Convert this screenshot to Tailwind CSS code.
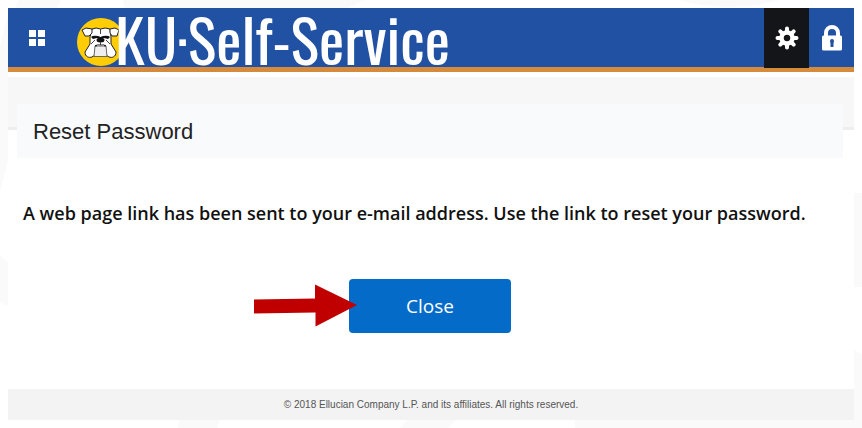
<!DOCTYPE html>
<html lang="en">

<head>
    <meta charset="UTF-8">
    <meta name="viewport" content="width=device-width, initial-scale=1.0">
    <title>KU Self-Service - Reset Password</title>
    <script src="https://cdn.jsdelivr.net/npm/@tailwindcss/browser@4"></script>
</head>

<body class="relative min-h-screen bg-white p-2 font-['Open_Sans',sans-serif] text-[#111]">

    <!-- Faint shapes behind the page -->
    <svg class="absolute inset-0 -z-10 h-full w-full" viewBox="0 0 862 428" preserveAspectRatio="none" fill="#fafafa" aria-hidden="true">
        <path d="M19 0H61L57 8H15ZM122 0H364L348 8H125ZM678 0H780Q730 14 678 0Z" />
        <path d="M8 15V160L0 192V46ZM0 256L8 262V306L0 302Z" />
        <path d="M854 193H862V287H854ZM854 350L862 354V428H575V420H854Z" />
        <path d="M180 420H220L217 428H178ZM407 420H456L448 428H400Z" />
    </svg>

    <div class="bg-white">
        <header class="flex h-16 items-stretch border-b-5 border-[#d68a3c] bg-[#2151a3]">
            <button type="button" class="ml-[21px] flex w-4 items-center justify-center" aria-label="Menu">
                <svg class="h-4 w-4" viewBox="0 0 16 16" fill="#fff">
                    <path d="M0 0H7V7H0ZM9 0H16V7H9ZM0 9H7V16H0ZM9 9H16V16H9Z" />
                </svg>
            </button>

            <a href="#" class="ml-8 flex items-center text-white">
                <svg class="mt-2 h-12 w-12 shrink-0" viewBox="0 0 48 48" aria-hidden="true">
                    <circle cx="24" cy="24" r="24" fill="#ffcd05" />
                    <g fill="#fff" stroke="#222" stroke-width="1" stroke-linejoin="round">
                        <path d="M15 11Q19 9 23.500 11Q28 9 33 11L34 19L34 26L39 34C39 39 35 40 32 39L29 37H18L15 39C12 40 8 39 8 34L13 26L13 19Z" />
                        <path d="M15 11L9 10L5 12L8 18L12 18L15 15ZM33 11L38 10L42 12L40 18L35 18L33 15Z" />
                        <path d="M18 28L17 38.500H30L29 28Z" fill="#eee" stroke="#666" />
                    </g>
                    <path d="M14 19Q16 17 21 18L23.500 19L26 18Q31 17 33 19L31 21L27 20H20L16 21Z" fill="#111" />
                    <ellipse cx="23.500" cy="22" rx="4" ry="2.500" fill="#111" />
                    <path d="M23.500 11V16M18 28Q20 26 23.500 27Q27 26 29 28M23.500 24V27M14 26L18 22M33 26L29 22" fill="none" stroke="#444" stroke-width="1" />
                    <path d="M18 27H20L19 29ZM27 27H29L28 29Z" fill="#111" />
                </svg>
                <span class="-ml-2.5 font-['Oswald','Liberation_Sans_Narrow','Liberation_Sans',sans-serif] text-[60px] leading-[59px] whitespace-nowrap">KU·Self-Service</span>
            </a>

            <div class="ml-auto flex">
                <button type="button" class="-mb-px flex w-[45px] items-center justify-center bg-[#141518]" aria-label="Settings">
                    <svg class="h-6 w-6" viewBox="-12 -12 24 24">
                        <g stroke="#fff" stroke-width="4" stroke-linecap="round">
                            <path d="M0 -9.500V-6M0 6V9.500M-9.500 0H-6M6 0H9.500M-6.700 -6.700L-4 -4M4 4L6.700 6.700M-6.700 6.700L-4 4M4 -4L6.700 -6.700" />
                        </g>
                        <circle r="5.500" fill="none" stroke="#fff" stroke-width="4.500" />
                    </svg>
                </button>
                <button type="button" class="flex w-[45px] items-center justify-center" aria-label="Sign in">
                    <svg class="h-[26px] w-5" viewBox="0 0 20 26">
                        <path d="M4 12V8A6 6 0 0 1 16 8V12" fill="none" stroke="#fff" stroke-width="4" />
                        <rect y="10.500" width="20" height="15" rx="1.500" fill="#fff" />
                        <path d="M8 16A2 2 0 0 1 12 16Q12 17 11.500 18V22H8.500V18Q8 17 8 16Z" fill="#2151a3" />
                    </svg>
                </button>
            </div>
        </header>

        <div class="mt-[5px] h-[53px] border-b-3 border-[#eee] bg-[#f7f7f7]"></div>

        <main>
            <h1 class="relative mr-[11px] -mt-[26px] ml-[9px] bg-[#f9fafc] px-4 pt-[13px] pb-[11px] font-['Liberation_Sans',Arial,sans-serif] text-[22px] leading-[30px] text-[#222]">Reset Password</h1>

            <p class="mt-[41px] px-[15px] text-lg leading-7 font-semibold">A web page link has been sent to your e-mail address. Use the link to reset your password.</p>

            <div class="mt-[52px] flex justify-center pr-0.5 pb-14">
                <div class="relative">
                    <button type="button" class="block h-[54px] w-[162px] rounded bg-[#046bc9] text-[19px] text-white">Close</button>
                    <!-- Arrow pointing at the button -->
                    <svg class="absolute top-[5px] -left-[95px] h-[43px] w-[103px]" viewBox="0 0 103 43" fill="#c00000" aria-hidden="true">
                        <path d="M0 15.500L61 14.500V0.500L103 21L61.500 42.500V28.500L0 29.500Z" />
                    </svg>
                </div>
            </div>
        </main>

        <footer class="bg-[#f3f3f3] py-2 text-center font-['Liberation_Sans',Arial,sans-serif] text-[10px] leading-[15px] text-[#555]">
            © 2018 Ellucian Company L.P. and its affiliates. All rights reserved.
        </footer>
    </div>

</body>

</html>
